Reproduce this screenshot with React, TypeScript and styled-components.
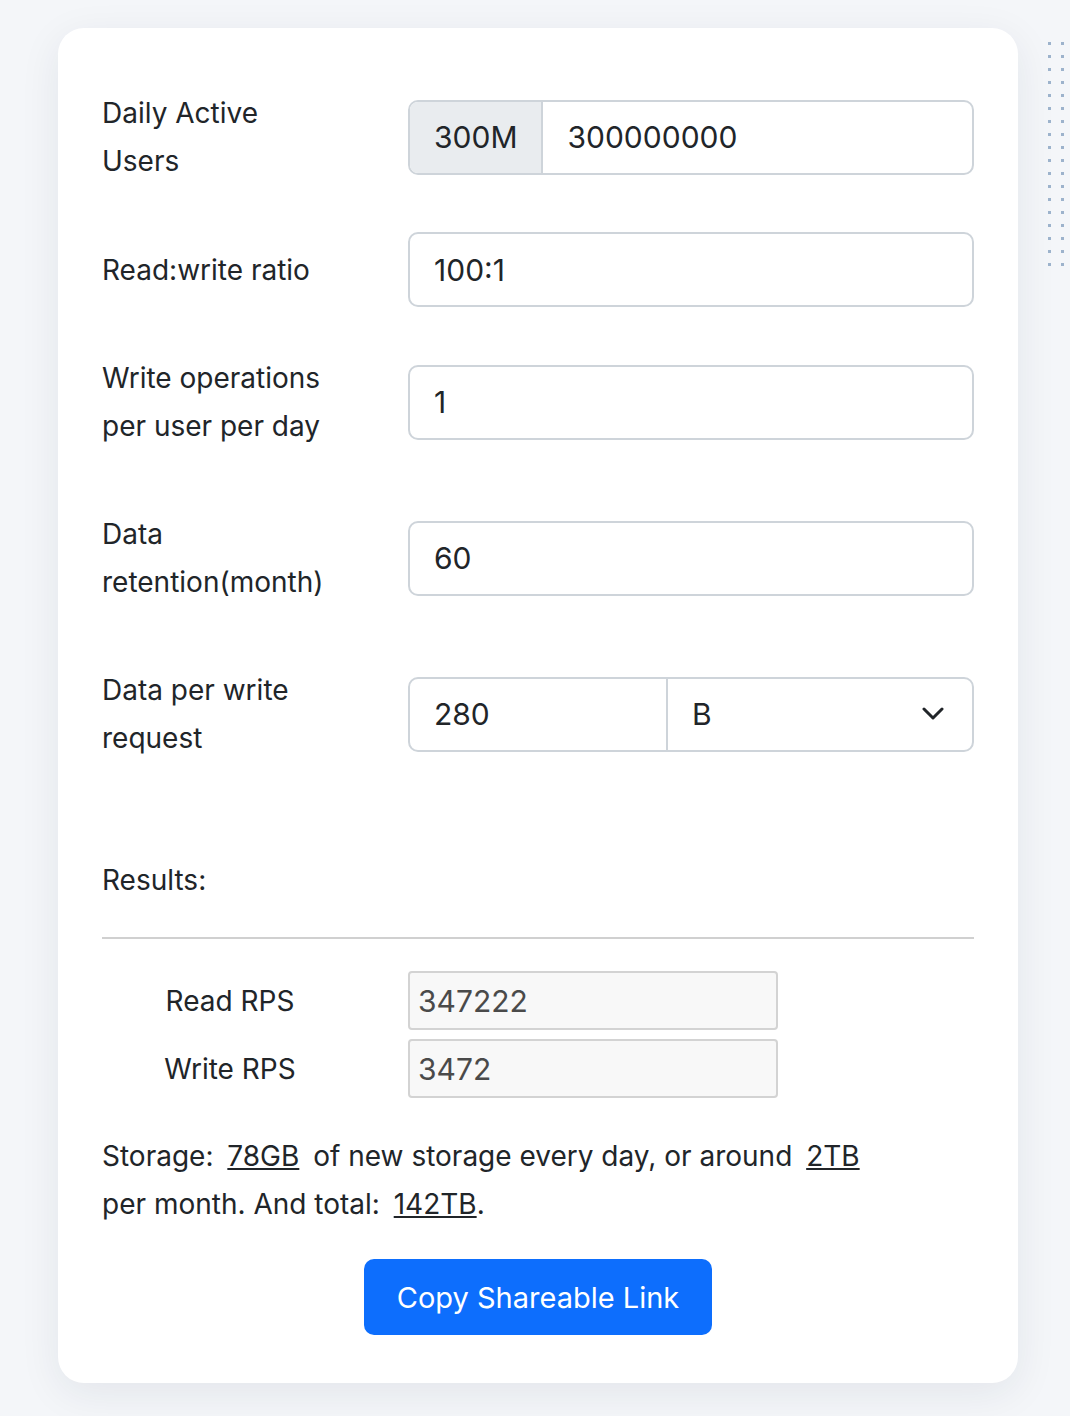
import React from "react";
import styled, { createGlobalStyle } from "styled-components";

const GlobalStyle = createGlobalStyle`
  body {
    margin: 0;
    background: #f4f6f9;
    font-family: Inter, "Liberation Sans", Arial, sans-serif;
    color: #212529;
  }
`;

const Page = styled.div`
  position: relative;
  min-height: 1416px;
  padding: 28px 52px 0 58px;
  box-sizing: border-box;
`;

const Dots = styled.svg`
  position: absolute;
  top: 40px;
  left: 1046px;
`;

const Card = styled.div`
  width: 960px;
  box-sizing: border-box;
  background: #fff;
  border-radius: 26px;
  box-shadow: 0 10px 40px rgba(30, 40, 60, 0.08);
  padding: 61px 44px 48px 44px;
`;

const Row = styled.div<{ gap: number }>`
  display: grid;
  grid-template-columns: 306px 1fr;
  align-items: center;
  margin-bottom: ${(p) => p.gap}px;
`;

const Label = styled.div`
  font-size: 28px;
  line-height: 48px;
`;

const Group = styled.div`
  display: flex;
  height: 75px;
  box-sizing: border-box;
  border: 2px solid #ced4da;
  border-radius: 10px;
  overflow: hidden;
  font-size: 30px;
`;

const Addon = styled.div`
  display: flex;
  align-items: center;
  padding: 0 24px;
  background: #e9ecef;
  border-right: 2px solid #ced4da;
`;

const Field = styled.div<{ w?: number; divider?: boolean }>`
  display: flex;
  align-items: center;
  box-sizing: border-box;
  padding: 0 24px;
  flex: ${(p) => (p.w ? `0 0 ${p.w}px` : "1")};
  border-right: ${(p) => (p.divider ? "2px solid #ced4da" : "none")};
  justify-content: space-between;
`;

const ResultsTitle = styled.div`
  font-size: 28px;
  margin-top: 100px;
  line-height: 36px;
  padding-bottom: 39px;
  border-bottom: 2px solid #d0d0d0;
`;

const ResultRow = styled.div`
  display: grid;
  grid-template-columns: 306px 370px;
  align-items: center;
  margin-top: 9px;
`;

const ResultLabel = styled.div`
  font-size: 28px;
  text-align: center;
  padding-right: 50px;
`;

const ReadOnly = styled.div`
  height: 59px;
  box-sizing: border-box;
  border: 2px solid #d3d3d3;
  border-radius: 4px;
  background: #f8f8f8;
  color: #4a4a4a;
  font-size: 30px;
  display: flex;
  align-items: center;
  padding-left: 8px;
`;

const Storage = styled.p`
  font-size: 28px;
  line-height: 48px;
  margin: 34px 0 0;
  a {
    color: #212529;
    text-decoration: underline;
    margin: 0 6px;
  }
`;

const ButtonWrap = styled.div`
  display: flex;
  justify-content: center;
  margin-top: 31px;
`;

const Button = styled.button`
  background: #0d6efd;
  color: #fff;
  border: none;
  border-radius: 10px;
  font-family: inherit;
  font-size: 29px;
  padding: 0;
  height: 76px;
  width: 348px;
`;

const Chevron = () => (
  <svg width="22" height="14" viewBox="0 0 22 14" fill="none">
    <path d="M2 2l9 9 9-9" stroke="#212529" strokeWidth="3" strokeLinecap="round" strokeLinejoin="round" />
  </svg>
);

export default function App() {
  const dots = [];
  for (let r = 0; r < 18; r++) {
    for (let c = 0; c < 2; c++) {
      dots.push(<rect key={`${r}-${c}`} x={2 + c * 13} y={2 + r * 13} width="3" height="3" fill="#9db3cc" />);
    }
  }
  return (
    <Page>
      <GlobalStyle />
      <Dots width="30" height="240">{dots}</Dots>
      <Card>
        <Row gap={47}>
          <Label>Daily Active<br />Users</Label>
          <Group>
            <Addon>300M</Addon>
            <Field>300000000</Field>
          </Group>
        </Row>
        <Row gap={47}>
          <Label>Read:write ratio</Label>
          <Group>
            <Field>100:1</Field>
          </Group>
        </Row>
        <Row gap={60}>
          <Label>Write operations<br />per user per day</Label>
          <Group>
            <Field>1</Field>
          </Group>
        </Row>
        <Row gap={60}>
          <Label>Data<br />retention(month)</Label>
          <Group>
            <Field>60</Field>
          </Group>
        </Row>
        <Row gap={0}>
          <Label>Data per write<br />request</Label>
          <Group>
            <Field w={258} divider>280</Field>
            <Field style={{ paddingRight: 28 }}>B<Chevron /></Field>
          </Group>
        </Row>
        <ResultsTitle>Results:</ResultsTitle>
        <ResultRow style={{ marginTop: 32 }}>
          <ResultLabel>Read RPS</ResultLabel>
          <ReadOnly>347222</ReadOnly>
        </ResultRow>
        <ResultRow>
          <ResultLabel>Write RPS</ResultLabel>
          <ReadOnly>3472</ReadOnly>
        </ResultRow>
        <Storage>
          Storage: <a>78GB</a> of new storage every day, or around <a>2TB</a>
          <br />per month. And total: <a style={{ marginRight: 0 }}>142TB</a>.
        </Storage>
        <ButtonWrap>
          <Button>Copy Shareable Link</Button>
        </ButtonWrap>
      </Card>
    </Page>
  );
}
